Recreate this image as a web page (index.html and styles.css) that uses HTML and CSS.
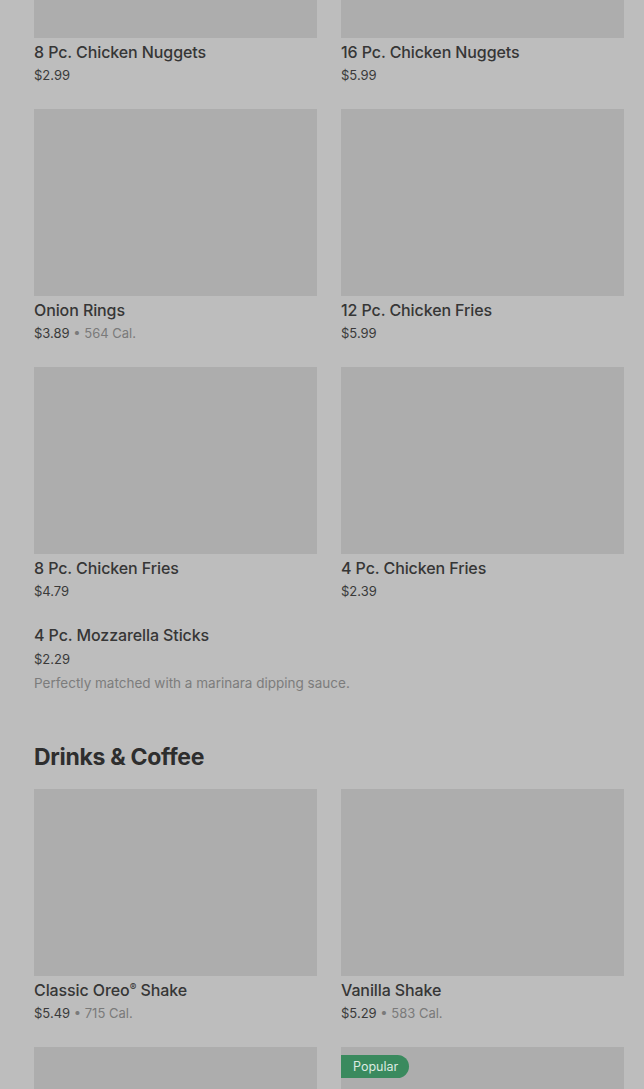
FILE: index.html
```html
<!DOCTYPE html>
<html>
<head>
<meta charset="utf-8">
<link rel="stylesheet" href="styles.css">
</head>
<body>
<main class="menu">
  <section class="section">
    <div class="grid">
      <div class="card"><div class="thumb"></div><div class="title">8 Pc. Chicken Nuggets</div><div class="meta"><span class="price">$2.99</span></div></div>
      <div class="card"><div class="thumb"></div><div class="title">16 Pc. Chicken Nuggets</div><div class="meta"><span class="price">$5.99</span></div></div>
      <div class="card"><div class="thumb"></div><div class="title">Onion Rings</div><div class="meta"><span class="price">$3.89</span><span class="dot"> • </span><span class="cal">564 Cal.</span></div></div>
      <div class="card"><div class="thumb"></div><div class="title">12 Pc. Chicken Fries</div><div class="meta"><span class="price">$5.99</span></div></div>
      <div class="card"><div class="thumb"></div><div class="title">8 Pc. Chicken Fries</div><div class="meta"><span class="price">$4.79</span></div></div>
      <div class="card"><div class="thumb"></div><div class="title">4 Pc. Chicken Fries</div><div class="meta"><span class="price">$2.39</span></div></div>
    </div>
    <div class="card wide">
      <div class="title">4 Pc. Mozzarella Sticks</div>
      <div class="meta"><span class="price">$2.29</span></div>
      <div class="desc">Perfectly matched with a marinara dipping sauce.</div>
    </div>
  </section>
  <section class="section">
    <h2 class="heading">Drinks &amp; Coffee</h2>
    <div class="grid">
      <div class="card"><div class="thumb"></div><div class="title">Classic Oreo<sup class="reg">®</sup> Shake</div><div class="meta"><span class="price">$5.49</span><span class="dot"> • </span><span class="cal">715 Cal.</span></div></div>
      <div class="card"><div class="thumb"></div><div class="title">Vanilla Shake</div><div class="meta"><span class="price">$5.29</span><span class="dot"> • </span><span class="cal">583 Cal.</span></div></div>
      <div class="card"><div class="thumb"></div></div>
      <div class="card"><div class="thumb"><span class="badge">Popular</span></div></div>
    </div>
  </section>
</main>
</body>
</html>
```
FILE: styles.css
```css
html, body {
  margin: 0;
  padding: 0;
  background: #bdbdbd;
  height: 1089px;
  overflow: hidden;
}
body {
  font-family: Inter, Roboto, "Liberation Sans", sans-serif;
  color: #333;
}
.menu {
  padding: 0 20px 0 34px;
  margin-top: -149px;
}
.grid {
  display: grid;
  grid-template-columns: 283px 283px;
  column-gap: 24px;
  row-gap: 25px;
}
.thumb {
  position: relative;
  height: 187px;
  background: #adadad;
}
.title {
  margin-top: 4px;
  font-size: 16px;
  line-height: 20px;
  font-weight: 500;
  color: #363636;
  letter-spacing: -0.1px;
}
.reg {
  font-size: 10px;
  line-height: 0;
  vertical-align: 5px;
  margin-left: 0;
}
.meta {
  margin-top: 4px;
  font-size: 13px;
  line-height: 18px;
}
.price { color: #3a3a3a; }
.dot, .cal { color: #7a7a7a; }
.wide { margin-top: 25px; }
.wide .meta { margin-top: 5px; }
.desc {
  margin-top: 6px;
  font-size: 13.5px;
  line-height: 18px;
  color: #7c7c7c;
}
.heading {
  margin: 50px 0 17px;
  font-size: 23px;
  line-height: 30px;
  font-weight: 700;
  color: #2e2e2e;
  letter-spacing: -0.3px;
}
.badge {
  position: absolute;
  left: 0;
  top: 8px;
  height: 23px;
  line-height: 23px;
  padding: 0 11px 0 12px;
  background: #3a8a5e;
  color: #dcebe2;
  font-size: 12.5px;
  border-radius: 0 12px 12px 0;
}
```
